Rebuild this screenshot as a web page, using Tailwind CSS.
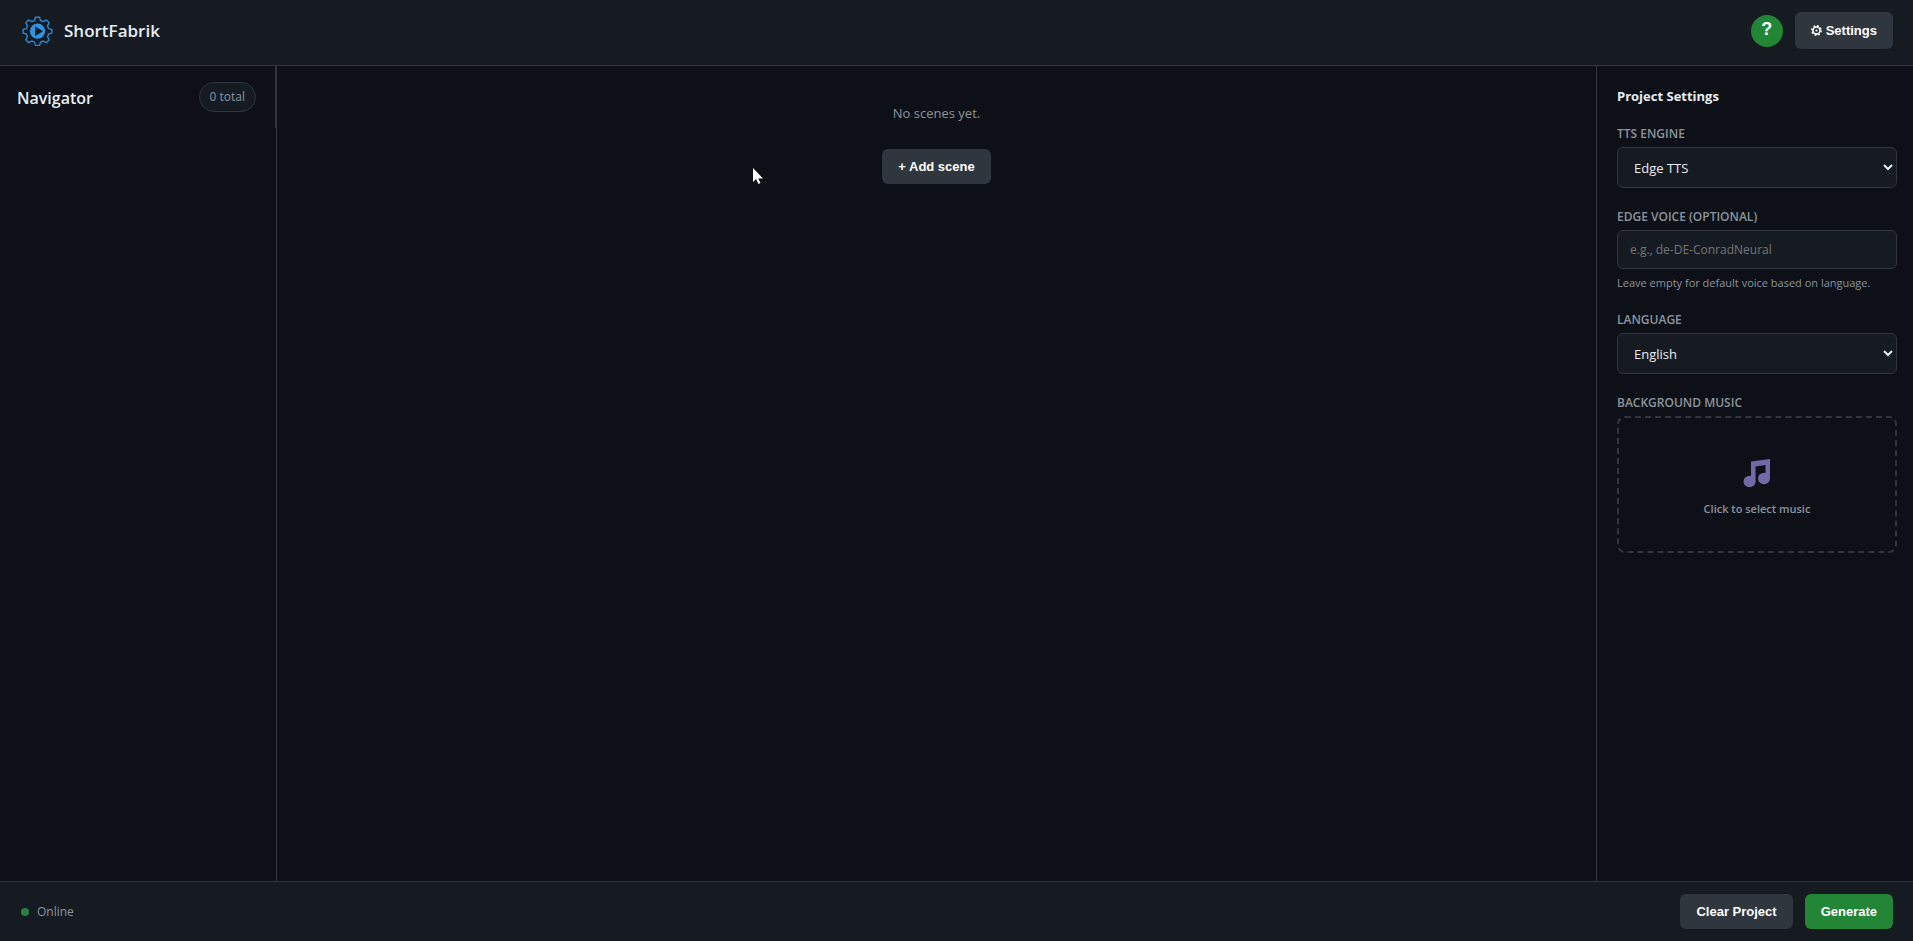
<!DOCTYPE html>
<html lang="en">
  <head>
    <meta charset="UTF-8" />
    <meta name="viewport" content="width=device-width, initial-scale=1.0" />
    <title>ShortFabrik</title>
    <!-- Tailwind CSS CDN -->
    <script src="https://cdn.jsdelivr.net/npm/@tailwindcss/browser@4"></script>
  </head>
  <body class="relative flex h-screen flex-col bg-[#0d1117] font-['Segoe_UI','Open_Sans',sans-serif] text-[#e6edf3]">
    <header class="flex items-center justify-between border-b border-[#30363d] bg-[#161b22] px-5 pt-3 pb-4">
      <div class="flex items-center gap-2">
        <svg class="h-9 w-9" viewBox="0 0 36 36" fill="none" aria-hidden="true">
          <path
            d="M15.4 4.200h4.200l.9 3.300 2.700 1.100 3.100-1.700 2.900 2.900-1.700 3.100 1.100 2.700 3.300.9v3.600l-3.300.9-1.100 2.700 1.700 3.100-2.900 2.900-3.100-1.700-2.700 1.100-.9 3.300h-4.200l-.9-3.300-2.700-1.100-3.100 1.700-2.900-2.900 1.700-3.100-1.100-2.700-3.300-.9v-3.600l3.300-.9 1.100-2.700-1.700-3.100 2.900-2.900 3.100 1.700 2.700-1.100z"
            stroke="#2587d2"
            stroke-width="1.400"
            stroke-linejoin="round"
          />
          <circle cx="17.500" cy="18.200" r="7.600" fill="#2b95e6" />
          <path d="M15 13.200l8 5-8 5z" fill="#161b22" />
        </svg>
        <h1 class="text-[17px] leading-6 font-semibold">ShortFabrik</h1>
      </div>
      <div class="flex items-center gap-3">
        <button type="button" aria-label="Help" class="h-8 w-8 rounded-full bg-[#238636] pb-[3px] font-['Liberation_Sans',sans-serif] text-lg leading-7 font-bold text-white">?</button>
        <button type="button" class="flex h-[37px] items-center gap-1 rounded-md bg-[#30363d] px-4 font-['Liberation_Sans',sans-serif] text-[13px] font-bold text-white">
          <svg class="h-[11px] w-[11px]" viewBox="0 0 12 12" fill="none" stroke="currentColor" aria-hidden="true">
            <circle cx="6" cy="6" r="3.900" stroke-width="1.800" />
            <circle cx="6" cy="6" r="1.200" fill="currentColor" stroke="none" />
            <circle cx="6" cy="6" r="5.200" stroke-width="1.400" stroke-dasharray="2 2.080" />
          </svg>
          Settings
        </button>
      </div>
    </header>

    <main class="flex min-h-0 flex-1">
      <aside class="relative w-[277px] shrink-0 border-r border-[#30363d] pt-4 pr-5 pl-[17px]">
        <div class="flex items-center justify-between">
          <h2 class="pt-px text-[16px] leading-6 font-semibold">Navigator</h2>
          <span class="rounded-full border border-[#30363d] bg-[#161b22] px-[10px] py-[5px] text-[12px] leading-[18px] text-[#8b949e]">0 total</span>
        </div>
        <!-- Resize handle -->
        <div class="absolute top-0 right-0 h-[62px] w-px bg-[#30363d]"></div>
      </aside>

      <section class="flex flex-1 flex-col items-center gap-6 pt-[35px]">
        <p class="text-[13px] leading-6 text-[#8b949e]">No scenes yet.</p>
        <button type="button" class="h-[35px] rounded-md bg-[#30363d] px-4 font-['Liberation_Sans',sans-serif] text-[13px] font-bold text-white">+ Add scene</button>
      </section>

      <aside class="w-[317px] shrink-0 border-l border-[#30363d] pt-5 pr-4 pl-5">
        <h2 class="mb-[19px] text-[13px] leading-5 font-bold">Project Settings</h2>
        <form class="flex flex-col gap-5">
          <div class="flex flex-col gap-1">
            <label for="engine" class="text-[12px] leading-[18px] font-semibold text-[#8b949e] uppercase">TTS Engine</label>
            <select id="engine" class="h-[41px] w-full rounded-md border border-[#30363d] bg-[#161b22] pl-3 text-[13px] text-[#e6edf3]">
              <option>Edge TTS</option>
            </select>
          </div>
          <div class="flex flex-col gap-1">
            <label for="voice" class="text-[12px] leading-[18px] font-semibold text-[#8b949e] uppercase">Edge Voice (optional)</label>
            <input id="voice" type="text" placeholder="e.g., de-DE-ConradNeural" class="h-[39px] w-full rounded-md border border-[#30363d] bg-[#161b22] px-3 text-[12px] placeholder:text-[#757575]" />
            <p class="mt-0.5 text-[11px] leading-4 text-[#8b949e]">Leave empty for default voice based on language.</p>
          </div>
          <div class="flex flex-col gap-1">
            <label for="language" class="text-[12px] leading-[18px] font-semibold text-[#8b949e] uppercase">Language</label>
            <select id="language" class="h-[41px] w-full rounded-md border border-[#30363d] bg-[#161b22] pl-3 text-[13px] text-[#e6edf3]">
              <option>English</option>
            </select>
          </div>
          <div class="flex flex-col gap-1">
            <label for="music" class="text-[12px] leading-[18px] font-semibold text-[#8b949e] uppercase">Background Music</label>
            <button id="music" type="button" class="flex h-[137px] w-full flex-col items-center justify-center gap-3 rounded-lg border-2 border-dashed border-[#30363d] pt-1 text-[11px] leading-4 font-semibold text-[#8b949e]">
              <svg class="h-8 w-8" viewBox="0 0 32 32" fill="#7169a8" aria-hidden="true">
                <path d="M10 4.500L29 2v20h-4.500V8L14.500 9.500v16H10z" />
                <ellipse cx="8.500" cy="24.500" rx="6" ry="5.700" />
                <ellipse cx="23" cy="21.500" rx="6" ry="5.700" />
              </svg>
              Click to select music
            </button>
          </div>
        </form>
      </aside>
    </main>

    <footer class="flex items-center justify-between border-t border-[#30363d] bg-[#161b22] py-3 pr-5 pl-[21px]">
      <div class="flex items-center gap-2 pt-px text-[12px] leading-[18px] text-[#8b949e]">
        <span class="h-2 w-2 rounded-full bg-[#277f42]"></span>
        Online
      </div>
      <div class="flex gap-3">
        <button type="button" class="h-[35px] rounded-md bg-[#30363d] px-4 font-['Liberation_Sans',sans-serif] text-[13px] font-bold text-white">Clear Project</button>
        <button type="button" class="h-[35px] rounded-md bg-[#238636] px-4 font-['Liberation_Sans',sans-serif] text-[13px] font-bold text-white">Generate</button>
      </div>
    </footer>

    <!-- Mouse pointer -->
    <svg class="pointer-events-none absolute top-[167px] left-[752px] h-[18px] w-3" viewBox="0 0 12 18" aria-hidden="true">
      <path d="M1 1v14l3-3 2.500 5 2-1-2.300-4.500H11z" fill="#fff" />
    </svg>
  </body>
</html>
